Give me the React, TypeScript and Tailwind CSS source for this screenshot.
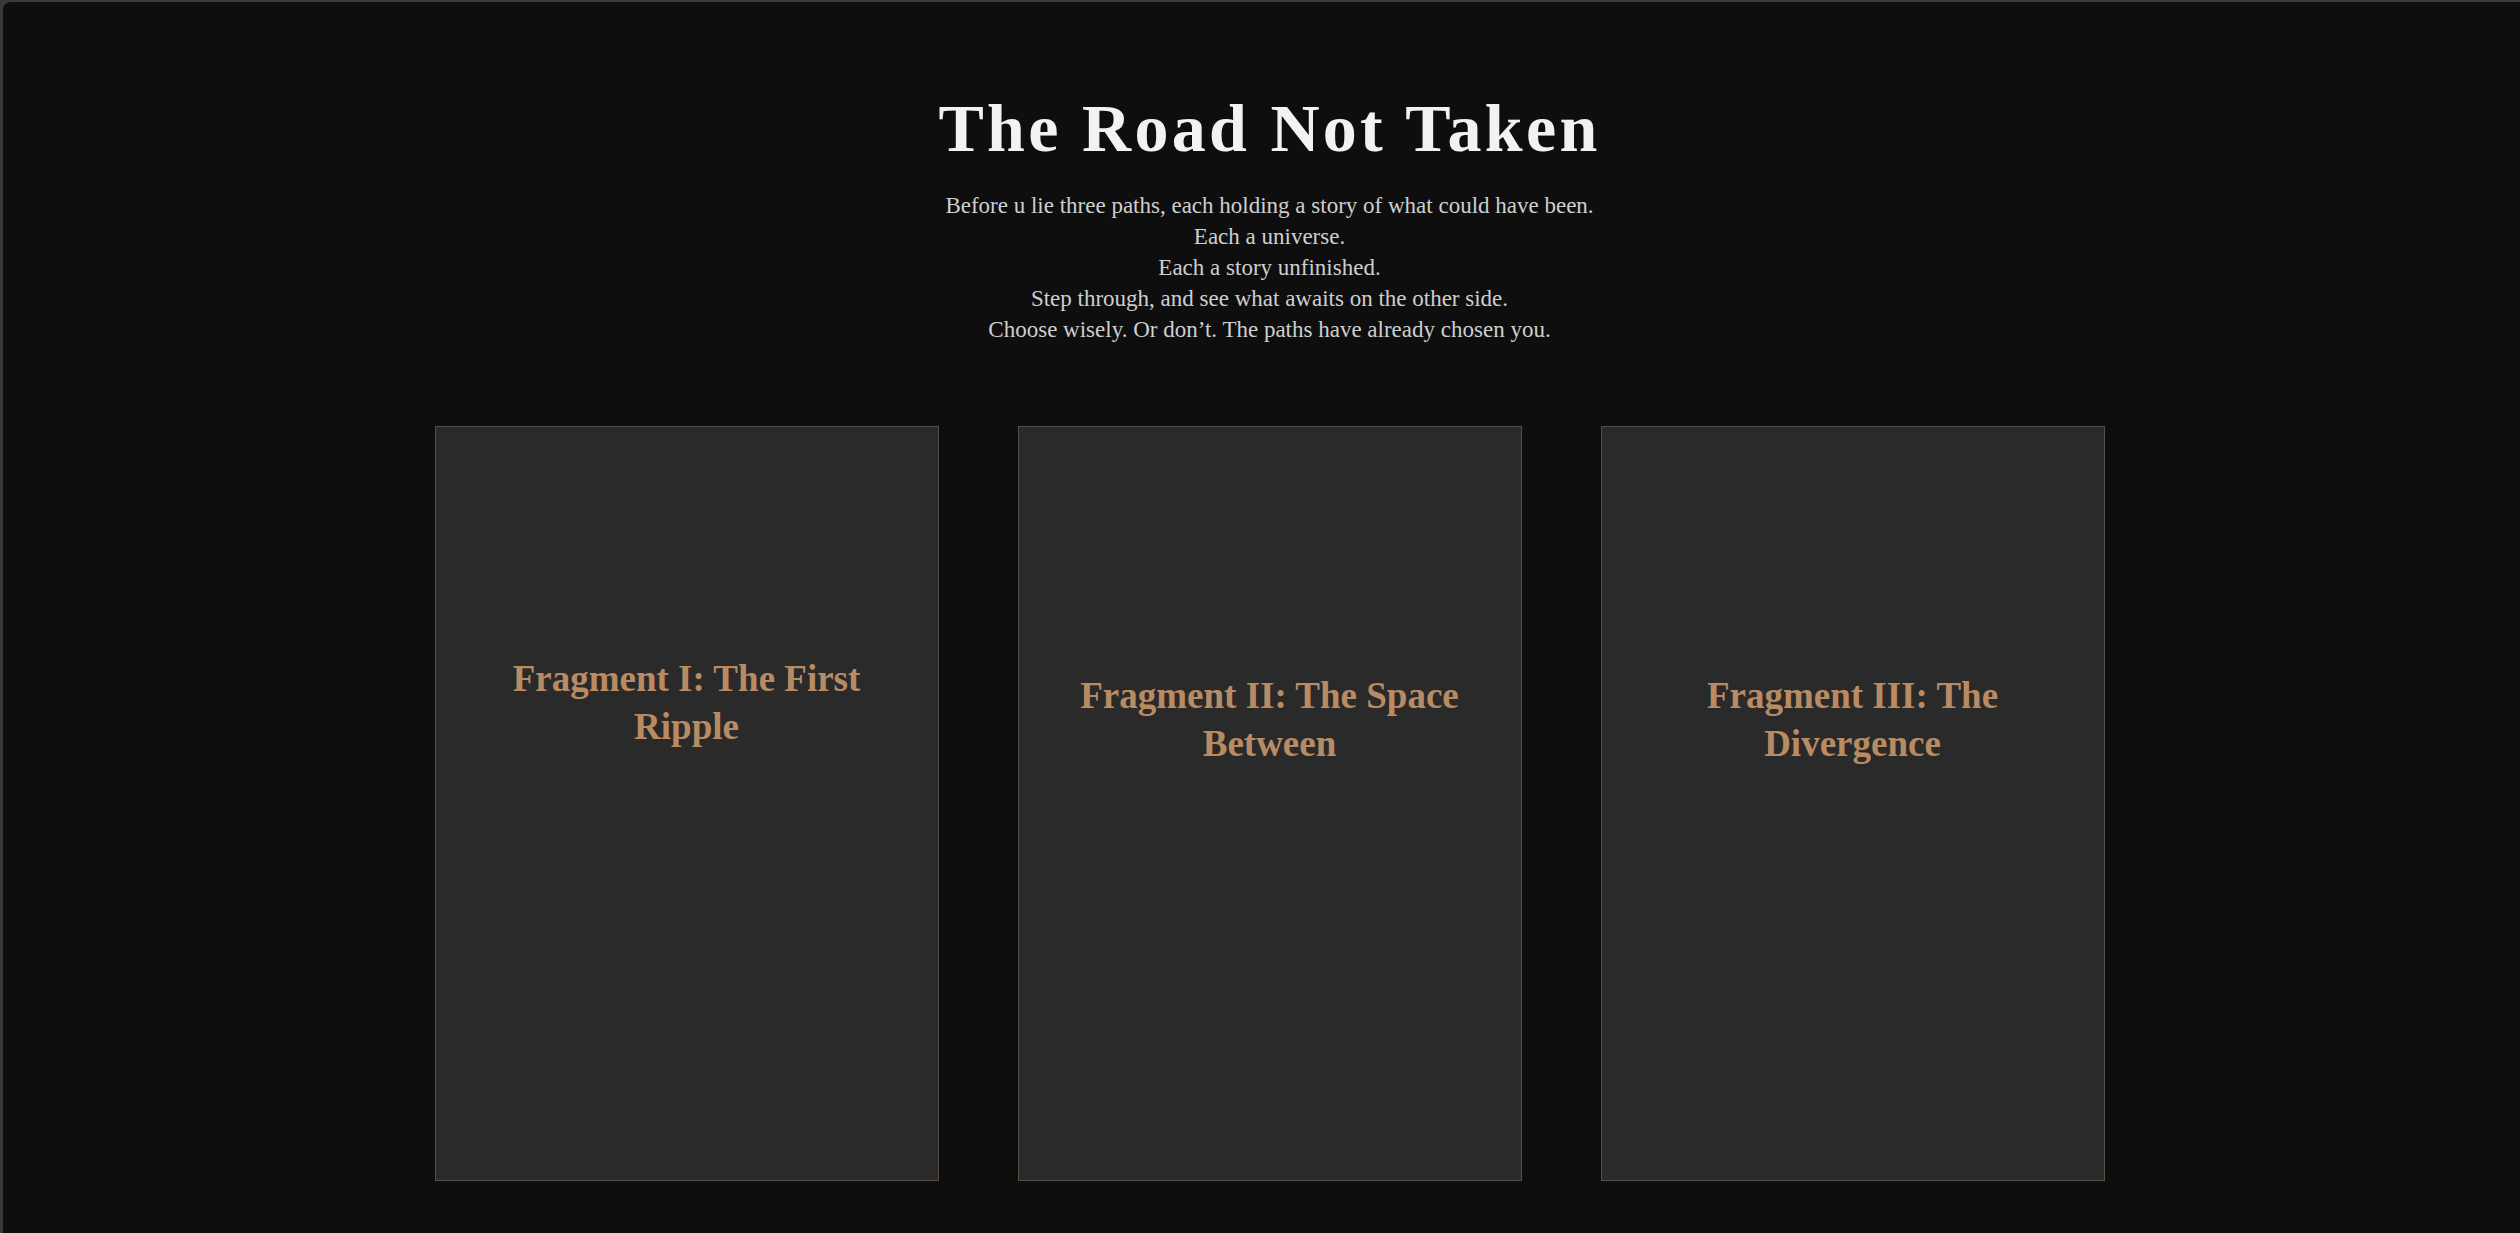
const fragments = [
  { title: "Fragment I: The First Ripple", pad: "pt-[228px]" },
  { title: "Fragment II: The Space Between", pad: "pt-[245px]" },
  { title: "Fragment III: The Divergence", pad: "pt-[245px]" },
];

const lines = [
  "Before u lie three paths, each holding a story of what could have been.",
  "Each a universe.",
  "Each a story unfinished.",
  "Step through, and see what awaits on the other side.",
  "Choose wisely. Or don\u2019t. The paths have already chosen you.",
];

const App = () => {
  return (
    <div className="h-[1233px] overflow-hidden bg-[#3a3a3a]">
      <main className="h-full ml-[3px] mt-[2px] rounded-tl-[8px] bg-[#0e0e0e] pl-[16px] font-['Liberation_Serif',serif]">
        <header className="pt-[86px] text-center">
          <h1 className="text-[68px] leading-[80px] font-bold tracking-[3.3px] text-[#f2f2f2]">
            The Road Not Taken
          </h1>
          <div className="mt-[22px] text-[23px] leading-[31px] text-[#cfcfcf]">
            {lines.map((l) => (
              <p key={l}>{l}</p>
            ))}
          </div>
        </header>

        <section className="mt-[81px] flex justify-center gap-[79px]">
          {fragments.map((f) => (
            <div
              key={f.title}
              className={`w-[504px] h-[755px] border border-[#574e41] bg-[#2a2a2a] px-12 ${f.pad}`}
            >
              <h2 className="text-center text-[37px] leading-[48px] font-bold text-[#b98b63]">
                {f.title}
              </h2>
            </div>
          ))}
        </section>
      </main>
    </div>
  );
};

export default App;
